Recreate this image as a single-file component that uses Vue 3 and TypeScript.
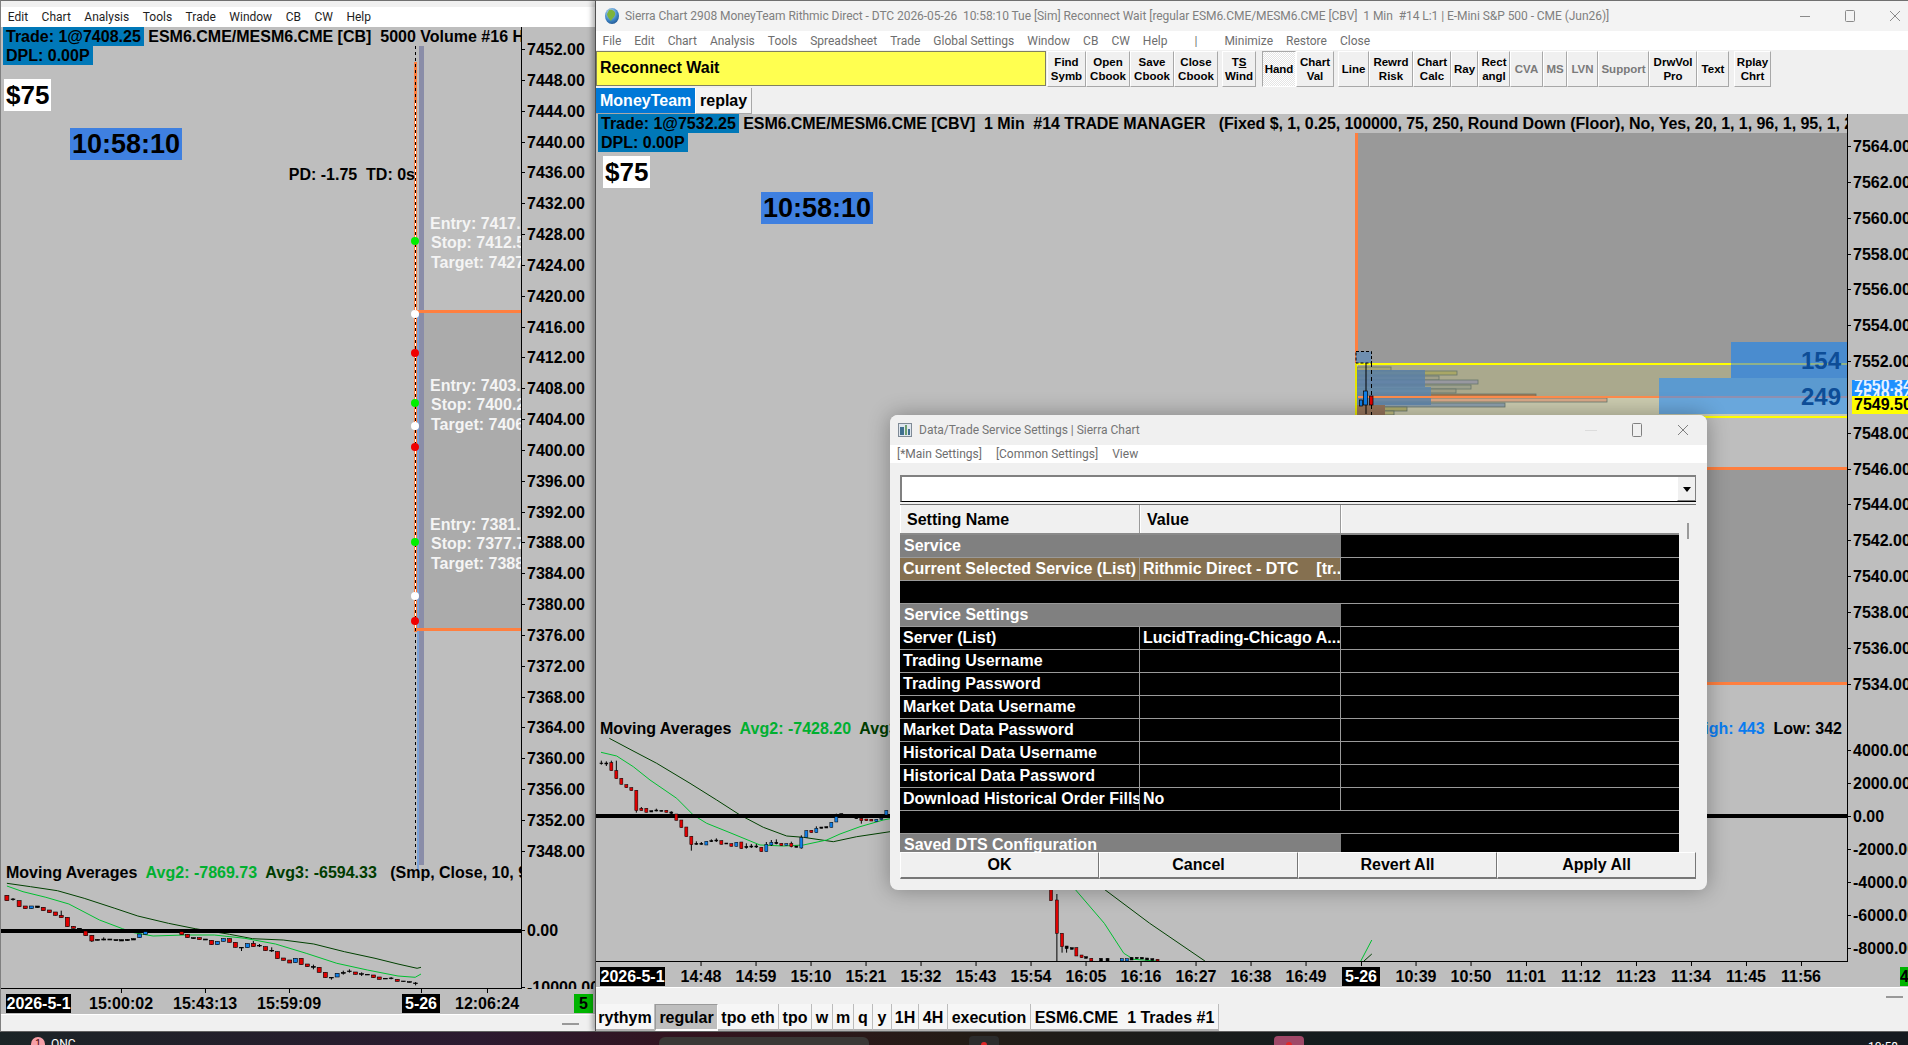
<script setup lang="ts">
type Bar = [number, number, number, string, number?, number?];

const titleText = "Sierra Chart 2908 MoneyTeam Rithmic Direct - DTC 2026-05-26  10:58:10 Tue [Sim] Reconnect Wait [regular ESM6.CME/MESM6.CME [CBV]  1 Min  #14 L:1 | E-Mini S&P 500 - CME (Jun26)]";
const headLeft = " ESM6.CME/MESM6.CME [CB]  5000 Volume #16 H";
const headRight = " ESM6.CME/MESM6.CME [CBV]  1 Min  #14 TRADE MANAGER   (Fixed $, 1, 0.25, 100000, 75, 250, Round Down (Floor), No, Yes, 20, 1, 1, 96, 1, 95, 1, 2";
const pdText = "PD: -1.75  TD: 0s";
const maName = "Moving Averages  ";
const gap2 = "  ";
const leftTail = "   (Smp, Close, 10, 9";
const lowText = "  Low: 342";

const menuLeft = ["Edit", "Chart", "Analysis", "Tools", "Trade", "Window", "CB", "CW", "Help"];
const menuRight = ["File", "Edit", "Chart", "Analysis", "Tools", "Spreadsheet", "Trade", "Global Settings", "Window", "CB", "CW", "Help"];

const toolButtons = [
  { lines: ["Find", "Symb"], w: 39 },
  { lines: ["Open", "Cbook"], w: 44 },
  { lines: ["Save", "Cbook"], w: 44 },
  { lines: ["Close", "Cbook"], w: 44, gap: 4 },
  { lines: ["TS", "Wind"], w: 34, gap: 6 },
  { lines: ["Hand"], w: 34, pressed: true },
  { lines: ["Chart", "Val"], w: 38, gap: 4 },
  { lines: ["Line"], w: 31 },
  { lines: ["Rewrd", "Risk"], w: 44 },
  { lines: ["Chart", "Calc"], w: 38 },
  { lines: ["Ray"], w: 27 },
  { lines: ["Rect", "angl"], w: 32 },
  { lines: ["CVA"], w: 33, off: true },
  { lines: ["MS"], w: 24, off: true },
  { lines: ["LVN"], w: 31, off: true },
  { lines: ["Support"], w: 51, off: true },
  { lines: ["DrwVol", "Pro"], w: 48 },
  { lines: ["Text"], w: 32, gap: 5 },
  { lines: ["Rplay", "Chrt"], w: 37 },
];

const bottomTabs = [
  { t: "rythym", w: 59 }, { t: "regular", w: 63, on: true }, { t: "tpo eth", w: 61 }, { t: "tpo", w: 33 },
  { t: "w", w: 21 }, { t: "m", w: 21 }, { t: "q", w: 19 }, { t: "y", w: 19 }, { t: "1H", w: 27 },
  { t: "4H", w: 29 }, { t: "execution", w: 83 }, { t: "ESM6.CME  1 Trades #1", w: 188 },
];

const leftPrices = Array.from({ length: 27 }, (_, i) => ({
  t: (7452 - i * 4).toFixed(2),
  y: 49 + i * 30.84,
}));
leftPrices.push({ t: "0.00", y: 930 }, { t: "-10000.00", y: 987 });

const rightPrices = [7564, 7562, 7560, 7558, 7556, 7554, 7552, 7548, 7546, 7544, 7542, 7540, 7538, 7536, 7534].map((p) => ({
  t: p.toFixed(2),
  y: 146 + (7564 - p) * 17.92,
}));
[[4000, 750], [2000, 783], [0, 816], [-2000, 849], [-4000, 882], [-6000, 915], [-8000, 948]].forEach(([p, y]) => {
  rightPrices.push({ t: p.toFixed(2), y });
});

const leftTimes = [
  { t: "15:00:02", x: 121 }, { t: "15:43:13", x: 205 }, { t: "15:59:09", x: 289 },
  { t: "5-26", x: 421, box: true }, { t: "12:06:24", x: 487 },
];
const rightLabels = ["14:48", "14:59", "15:10", "15:21", "15:32", "15:43", "15:54", "16:05", "16:16", "16:27", "16:38", "16:49", "5-26", "10:39", "10:50", "11:01", "11:12", "11:23", "11:34", "11:45", "11:56"];
const rightTimes = rightLabels.map((t, i) => ({ t, x: 701 + i * 55, box: t === "5-26" }));

const trades = [
  { cls: "t1", e: "Entry: 7417.", s: "Stop: 7412.5", g: "Target: 7427" },
  { cls: "t2", e: "Entry: 7403.", s: "Stop: 7400.2", g: "Target: 7406" },
  { cls: "t3", e: "Entry: 7381.", s: "Stop: 7377.7", g: "Target: 7388" },
];
const dots = [
  [415, 241, "#00f000"], [415, 314, "#fff"], [415, 353, "#f00000"],
  [415, 403, "#00f000"], [415, 426, "#fff"], [415, 447, "#f00000"],
  [415, 542, "#00f000"], [415, 596, "#fff"], [415, 621, "#f00000"],
] as [number, number, string][];

const R = "#e00000";
const B = "#0f7fe8";
const K = "#000";

// left lower pane, measured on x = 15.7 per bar
const leftBars: Bar[] = [
  [18, 166, 182, R], [34, 177, 179, K, 174, 182], [50, 182, 200, R], [66, 198, 206, R], [82, 198, 206, B], [98, 198, 203, K],
  [113, 202, 212, R], [129, 210, 218, R], [145, 216, 226, R], [160, 226, 233, R, 212, 233], [176, 232, 260, R], [192, 259, 265, R],
  [208, 265, 267, K], [224, 273, 287, R], [240, 286, 303, R, 286, 306], [255, 298, 301, K], [271, 297, 300, K, 292, 301], [287, 297, 300, K],
  [303, 299, 302, K], [318, 299, 303, K], [333, 298, 302, K], [349, 296, 300, K], [365, 282, 293, B], [380, 275, 283, B],
  [396, 274, 277, K], [412, 271, 273, K], [475, 275, 284, R], [490, 283, 293, R], [506, 293, 296, K], [521, 293, 299, R],
  [537, 297, 300, K], [553, 301, 314, R], [568, 304, 314, B], [584, 296, 304, B], [600, 296, 307, R], [615, 307, 322, R],
  [631, 322, 324, K, 322, 333], [647, 311, 323, B], [662, 310, 320, R, 303, 320], [678, 316, 318, K, 312, 321], [694, 320, 332, R], [710, 331, 333, K, 322, 336],
  [725, 335, 356, R], [741, 354, 361, R], [757, 360, 369, R], [772, 355, 368, B], [787, 355, 374, R], [803, 372, 380, R],
  [819, 379, 382, K, 374, 388], [834, 382, 397, R], [850, 397, 413, R], [866, 412, 414, K, 412, 419], [881, 400, 411, B], [897, 397, 400, K, 392, 404],
  [913, 393, 395, K, 388, 398], [929, 396, 403, R], [945, 401, 403, K, 397, 408], [960, 403, 405, K], [976, 405, 413, R], [991, 411, 418, R],
  [1007, 415, 417, K], [1022, 414, 416, K, 411, 418], [1038, 418, 424, R], [1054, 423, 425, K], [1070, 425, 427, K], [1086, 429, 431, K, 426, 436],
];
const leftCandles = leftBars.map((b) => toPage(b, (x) => x / 2.613, (y) => 840 + y / 3));
const leftMa2 = line([[18, 138], [60, 155], [120, 172], [180, 192], [260, 240], [320, 266], [350, 278], [400, 288], [480, 285], [560, 285], [640, 295], [720, 312], [800, 340], [880, 370], [960, 390], [1040, 408], [1085, 412], [1100, 402]], 2.613, 0, 840);
const leftMa3 = line([[18, 130], [80, 140], [150, 152], [220, 175], [300, 205], [360, 228], [440, 250], [510, 266], [600, 283], [660, 296], [740, 300], [820, 312], [900, 335], [980, 355], [1040, 372], [1090, 385], [1100, 382]], 2.613, 0, 840);

const rightBars: Bar[] = [
  [34, 129, 131, K, 122, 134], [49, 129, 132, K, 124, 138], [64, 128, 152, R, 122, 152], [79, 152, 176, R, 122, 176], [94, 175, 193, R], [109, 194, 203, R],
  [124, 203, 212, R], [139, 211, 272, R, 211, 278], [154, 265, 272, R, 261, 272], [169, 265, 277, R], [184, 272, 276, K], [199, 270, 273, K, 266, 274],
  [214, 271, 274, K], [229, 271, 277, R], [244, 276, 280, K, 274, 284], [259, 282, 301, R], [274, 300, 323, R], [289, 321, 350, R], [304, 349, 374, R, 349, 392],
  [319, 370, 373, K, 364, 374], [334, 370, 373, K, 366, 374], [349, 364, 375, B], [364, 362, 365, K, 358, 366], [379, 360, 363, K, 355, 366], [394, 362, 373, R],
  [409, 369, 372, K], [424, 371, 379, R], [439, 367, 379, B], [454, 366, 386, R], [469, 379, 383, K, 370, 386], [484, 378, 381, K, 372, 384], [499, 378, 381, K, 372, 384],
  [514, 382, 395, R], [529, 373, 395, B, 366, 395], [544, 367, 375, B, 360, 378], [559, 367, 371, K, 358, 373], [574, 370, 377, R], [589, 371, 376, B],
  [604, 370, 380, R, 365, 382], [619, 378, 382, K], [634, 352, 384, B, 346, 386], [649, 332, 352, B], [664, 331, 338, R], [679, 325, 338, B, 319, 338],
  [694, 321, 325, K], [709, 320, 324, K], [724, 307, 322, B], [739, 290, 306, B, 281, 306], [754, 281, 285, K], [799, 292, 296, K], [814, 295, 302, R, 295, 311],
  [829, 297, 302, R], [844, 298, 303, R], [859, 298, 305, B], [874, 295, 299, B], [889, 271, 285, B],
];
const lowBars: Bar[] = [
  [248, 0, 62, R], [257, 60, 160, R, 42, 243], [265, 160, 200, R, 160, 218], [272, 198, 206, K, 198, 218], [280, 203, 208, K], [287, 203, 228, R], [295, 225, 233, R],
  [302, 230, 235, K], [310, 235, 243, R], [325, 235, 243, K], [335, 235, 243, K], [357, 236, 243, B], [365, 236, 243, B], [372, 232, 240, K], [380, 232, 236, K],
  [388, 232, 237, K], [396, 234, 240, K], [404, 236, 241, K], [412, 238, 243, R],
];
const rightCandles = [
  ...rightBars.map((b) => toPage(b, (x) => 590 + x / 3, (y) => 720 + y / 3)),
  ...lowBars.map((b) => toPage(b, (x) => 890 + x / 1.54, (y) => 880 + y / 3)),
];
const rightMa2 = line([[33, 97], [80, 108], [130, 140], [180, 180], [260, 235], [310, 285], [350, 310], [420, 338], [510, 375], [580, 378], [640, 375], [710, 360], [750, 342], [810, 320], [880, 300], [900, 296]], 3, 590, 720);
const rightMa3 = line([[58, 55], [120, 88], [200, 130], [300, 190], [380, 240], [450, 285], [520, 322], [590, 348], [640, 352], [730, 365], [800, 350], [900, 335]], 3, 590, 720);
const lowMa2 = line([[285, 28], [330, 130], [360, 220], [375, 238], [410, 243]], 1.54, 890, 880);
const lowMa3 = line([[330, 28], [400, 130], [485, 243]], 1.54, 890, 880);
const lastMa2 = line([[725, 243], [742, 180]], 1.54, 890, 880);
const lastMa3 = line([[730, 243], [742, 222]], 1.54, 890, 880);

// volume profile, x in px from the value area's left edge, top to bottom
const profile = [
  [367, 34, "#a3a37a"], [371, 100, "#a9a766"], [376, 82, "#a0a088"], [380, 121, "#9898a0"], [385, 114, "#9ca08c"],
  [389, 99, "#9c9c84"], [394, 179, "#a8764c"], [398, 250, "#d8a888"], [403, 148, "#8ea0ac"], [407, 50, "#b0ae70"], [411, 37, "#c0bd80"],
] as [number, number, string][];

const rows = [
  { kind: "section", a: "Service", b: "" },
  { kind: "current", a: "Current Selected Service (List)", b: "Rithmic Direct - DTC    [tr..." },
  { kind: "blank", a: "", b: "" },
  { kind: "section", a: "Service Settings", b: "" },
  { kind: "row", a: "Server (List)", b: "LucidTrading-Chicago A..." },
  { kind: "row", a: "Trading Username", b: "" },
  { kind: "row", a: "Trading Password", b: "" },
  { kind: "row", a: "Market Data Username", b: "" },
  { kind: "row", a: "Market Data Password", b: "" },
  { kind: "row", a: "Historical Data Username", b: "" },
  { kind: "row", a: "Historical Data Password", b: "" },
  { kind: "row", a: "Download Historical Order Fills", b: "No" },
  { kind: "blank", a: "", b: "" },
  { kind: "section", a: "Saved DTS Configuration", b: "" },
];

function toPage(b: Bar, fx: (x: number) => number, fy: (y: number) => number) {
  const [x, top, bottom, color, wt, wb] = b;
  return {
    x: fx(x),
    top: fy(top),
    bottom: fy(bottom),
    color,
    wickTop: fy(wt ?? top),
    wickBottom: fy(wb ?? bottom),
  };
}

function line(pts: number[][], sx: number, ox: number, oy: number) {
  return pts.map(([x, y]) => `${(ox + x / sx).toFixed(1)},${(oy + y / 3).toFixed(1)}`).join(" ");
}

const placeY = (y: number) => ({ top: `${y}px` });
const placeX = (x: number) => ({ left: `${x}px` });
</script>

<template>
  <div class="desktop">
    <!-- left chart window -->
    <section class="window win-left">
      <div class="top-band"></div>
      <nav class="menu menu-dark">
        <span v-for="m in menuLeft" :key="m">{{ m }}</span>
      </nav>
      <div class="chart-grid grid-left">
        <div class="plot">
          <svg class="draw" width="520" height="962" viewBox="1 27 520 962">
            <rect x="424" y="311" width="98" height="318" fill="#ababab" />
            <rect x="419" y="46" width="5" height="819" fill="#8a8da8" />
            <rect x="417" y="310" width="2" height="560" fill="#7ba2d8" />
            <rect x="414" y="62" width="3" height="570" fill="#ff7f3f" />
            <rect x="415" y="100" width="1" height="530" fill="#fff" />
            <rect x="415" y="278" width="1" height="36" fill="#fff" />
            <line x1="415.5" y1="46" x2="415.5" y2="865" stroke="#000" stroke-dasharray="3 3" />
            <rect x="416" y="310" width="106" height="3" fill="#ff7f3f" />
            <rect x="416" y="628" width="106" height="3" fill="#ff7f3f" />
            <circle v-for="(d, i) in dots" :key="i" :cx="d[0]" :cy="d[1]" r="4" :fill="d[2]" />
            <polyline :points="leftMa3" class="ma ma3" />
            <polyline :points="leftMa2" class="ma ma2" />
            <rect x="1" y="929" width="521" height="4" fill="#000" />
            <g v-for="(c, i) in leftCandles" :key="i">
              <line :x1="c.x" :x2="c.x" :y1="c.wickTop" :y2="c.wickBottom" stroke="#000" />
              <rect :x="c.x - 2" :y="c.top" width="4" :height="c.bottom - c.top" :fill="c.color" stroke="#000" stroke-width="0.6" />
            </g>
          </svg>

          <div class="head">
            <div><span class="hl">Trade: 1@7408.25</span><span>{{ headLeft }}</span></div>
            <div><span class="hl">DPL: 0.00P</span></div>
          </div>
          <div class="cash cash-left">$75</div>
          <div class="clock clock-left">10:58:10</div>
          <div class="pd">{{ pdText }}</div>
          <div v-for="t in trades" :key="t.cls" :class="['trade', t.cls]">
            <div>{{ t.e }}</div>
            <div class="ind">{{ t.s }}</div>
            <div class="ind">{{ t.g }}</div>
          </div>
          <div class="study study-left">{{ maName }}<span class="green">Avg2: -7869.73</span>{{ gap2 }}<span class="dkgreen">Avg3: -6594.33</span>{{ leftTail }}</div>
        </div>
        <div class="axis">
          <span v-for="p in leftPrices" :key="p.t" class="price" :style="placeY(p.y - 27 - 8)">{{ p.t }}</span>
        </div>
        <div class="times">
          <span class="date date-left">2026-5-1</span>
          <span
            v-for="t in leftTimes"
            :key="t.t"
            :class="['time', { box: t.box }]"
            :style="placeX(t.x - 1)"
          >{{ t.t }}</span>
          <span class="flag flag-left">5</span>
        </div>
      </div>
      <footer class="foot foot-left"><i class="dash"></i></footer>
    </section>

    <!-- right chart window -->
    <section class="window win-right">
      <header class="titlebar">
        <svg class="globe" width="16" height="18" viewBox="0 0 16 18">
          <defs>
            <radialGradient id="gl" cx="0.4" cy="0.3" r="0.8">
              <stop offset="0" stop-color="#cfe9ff" />
              <stop offset="0.6" stop-color="#3d85c6" />
              <stop offset="1" stop-color="#1d4f86" />
            </radialGradient>
          </defs>
          <ellipse cx="8" cy="9" rx="7" ry="8" fill="url(#gl)" />
          <path d="M5 3 C9 2 12 5 11 8 C10 11 8 11 7 14 C5 12 3 9 3 7 Z" fill="#7db33a" />
        </svg>
        <span class="title-text">{{ titleText }}</span>
        <div class="controls">
          <svg width="12" height="12" viewBox="0 0 12 12"><path d="M1 6.5h10" stroke="#8a8a8a" /></svg>
          <svg width="12" height="12" viewBox="0 0 12 12"><rect x="1.5" y="0.5" width="9" height="11" rx="1" fill="none" stroke="#8a8a8a" /></svg>
          <svg width="12" height="12" viewBox="0 0 12 12"><path d="M1 1l10 10M11 1L1 11" stroke="#8a8a8a" /></svg>
        </div>
      </header>
      <nav class="menu menu-gray">
        <span v-for="m in menuRight" :key="m">{{ m }}</span>
        <span class="sep">|</span>
        <span>Minimize</span>
        <span>Restore</span>
        <span>Close</span>
      </nav>
      <div class="toolbar">
        <div class="status">Reconnect Wait</div>
        <button
          v-for="b in toolButtons"
          :key="b.lines.join()"
          :class="['tool', { pressed: b.pressed, off: b.off }]"
          :style="{ width: b.w + 'px', marginRight: (b.gap ?? 0) + 'px' }"
        >
          <span v-for="l in b.lines" :key="l">
            <template v-if="l === 'TS'">T<u>S</u></template>
            <template v-else>{{ l }}</template>
          </span>
        </button>
      </div>
      <div class="books">
        <span class="book book-on">MoneyTeam</span>
        <span class="book">replay</span>
      </div>
      <div class="chart-grid grid-right">
        <div class="plot plot-right">
          <svg class="draw" width="1251" height="848" viewBox="596 114 1251 848">
            <rect x="1358" y="133" width="489" height="230" fill="#999" />
            <rect x="1358" y="468" width="489" height="215" fill="#999" />
            <rect x="1355" y="133" width="3" height="230" fill="#ff7f3f" />
            <rect x="1358" y="365" width="489" height="32" fill="#aaa98d" />
            <rect x="1358" y="397" width="489" height="19" fill="#cbcbaf" />
            <rect v-for="p in profile" :key="p[0]" x="1357" :y="p[0]" :width="p[1]" height="4" :fill="p[2]" stroke="#66766c" stroke-width="0.8" />
            <rect x="1357" y="370" width="68" height="17" fill="#5a80a8" opacity="0.85" />
            <rect x="1357" y="387" width="74" height="18" fill="#5e86ad" opacity="0.85" />
            <rect x="1357" y="405" width="28" height="10" fill="#96755c" />
            <rect x="1731" y="342" width="116" height="36" fill="#4a8ccf" />
            <rect x="1659" y="378" width="188" height="20" fill="#5b9ad0" />
            <rect x="1659" y="398" width="188" height="16" fill="#69a7dc" />
            <rect x="1358" y="396" width="301" height="2" fill="#ff8c4c" />
            <rect x="1659" y="396" width="188" height="2" fill="#8f8fb0" />
            <rect x="1356" y="363" width="491" height="2" fill="#ffff00" />
            <rect x="1731" y="363" width="116" height="2" fill="#8fb18a" />
            <rect x="1355" y="363" width="2" height="53" fill="#e6e600" />
            <rect x="1356" y="416" width="491" height="2" fill="#ffff00" />
            <rect x="1707" y="467" width="140" height="3" fill="#ff7f3f" />
            <rect x="1707" y="682" width="140" height="3" fill="#ff7f3f" />
            <rect x="1356" y="351.5" width="15.5" height="11.5" fill="#6f8fb0" stroke="#000" stroke-dasharray="3 2" />
            <line x1="1366" x2="1366" y1="363" y2="414" stroke="#000" />
            <line x1="1371.5" x2="1371.5" y1="363" y2="415" stroke="#000" stroke-dasharray="4 3" />
            <rect x="1363.5" y="391" width="4" height="14" :fill="B" stroke="#000" stroke-width="0.7" />
            <rect x="1359.5" y="400" width="3" height="6" :fill="B" stroke="#000" stroke-width="0.7" />
            <rect x="1369.5" y="396" width="3.5" height="9" :fill="R" stroke="#000" stroke-width="0.7" />

            <polyline :points="rightMa3" class="ma ma3" />
            <polyline :points="rightMa2" class="ma ma2" />
            <polyline :points="lowMa3" class="ma ma3" />
            <polyline :points="lowMa2" class="ma ma2" />
            <polyline :points="lastMa3" class="ma ma3" />
            <polyline :points="lastMa2" class="ma ma2" />
            <rect x="596" y="814" width="1251" height="4" fill="#000" />
            <g v-for="(c, i) in rightCandles" :key="i">
              <line :x1="c.x" :x2="c.x" :y1="c.wickTop" :y2="c.wickBottom" stroke="#000" />
              <rect :x="c.x - 1.5" :y="c.top" width="3" :height="c.bottom - c.top" :fill="c.color" stroke="#000" stroke-width="0.5" />
            </g>
          </svg>

          <div class="head">
            <div><span class="hl">Trade: 1@7532.25</span><span class="tight">{{ headRight }}</span></div>
            <div><span class="hl">DPL: 0.00P</span></div>
          </div>
          <div class="cash cash-right">$75</div>
          <div class="clock clock-right">10:58:10</div>
          <div class="vol vol-a">154</div>
          <div class="vol vol-b">249</div>
          <div class="study study-right">{{ maName }}<span class="green">Avg2: -7428.20</span>{{ gap2 }}<span class="dkgreen">Avg3</span></div>
          <div class="study study-hl"><span class="blue">High: 443</span>{{ lowText }}</div>
        </div>
        <div class="axis">
          <span v-for="p in rightPrices" :key="p.t" class="price" :style="placeY(p.y - 114 - 8)">{{ p.t }}</span>
          <span class="last last-blue"><b>7550.34</b><b>7549.94</b></span>
          <span class="last last-yellow">7549.50</span>
        </div>
        <div class="times">
          <span class="date date-right">2026-5-1</span>
          <span
            v-for="t in rightTimes"
            :key="t.t"
            :class="['time', { box: t.box }]"
            :style="placeX(t.x - 596)"
          >{{ t.t }}</span>
          <span class="flag flag-right">4</span>
        </div>
      </div>
      <footer class="foot foot-right">
        <i class="dash"></i>
        <div class="tabs">
          <span
            v-for="t in bottomTabs"
            :key="t.t"
            :class="['tab', { on: t.on }]"
            :style="{ width: t.w + 'px' }"
          >{{ t.t }}</span>
        </div>
      </footer>
    </section>

    <!-- settings dialog -->
    <section class="dialog">
      <header class="dlg-title">
        <svg width="14" height="14" viewBox="0 0 14 14">
          <rect x="0.5" y="0.5" width="13" height="13" fill="#dfe6ee" stroke="#7f8a96" />
          <rect x="2" y="4" width="4" height="8" fill="#3f6f8f" />
          <rect x="7" y="2" width="2" height="10" fill="#6fa06f" />
          <rect x="10" y="6" width="2" height="6" fill="#3f6f8f" />
        </svg>
        <span class="dlg-name">Data/Trade Service Settings | Sierra Chart</span>
        <div class="dlg-controls">
          <svg width="12" height="12" viewBox="0 0 12 12"><path d="M0 6.5h12" stroke="#dcdcdc" /></svg>
          <svg width="12" height="14" viewBox="0 0 12 14"><rect x="1.5" y="0.5" width="9" height="13" rx="1" fill="none" stroke="#808080" /></svg>
          <svg width="12" height="12" viewBox="0 0 12 12"><path d="M1 1l10 10M11 1L1 11" stroke="#808080" /></svg>
        </div>
      </header>
      <nav class="dlg-menu">
        <span>[*Main Settings]</span>
        <span>[Common Settings]</span>
        <span>View</span>
      </nav>
      <div class="dlg-body">
        <div class="combo"><i class="combo-btn"></i></div>
        <div class="table">
          <div class="table-main">
            <div class="row row-head">
              <span class="cell">Setting Name</span>
              <span class="cell">Value</span>
              <span class="cell"></span>
            </div>
            <div v-for="(r, i) in rows" :key="i" :class="['row', 'row-' + r.kind]">
              <span class="cell">{{ r.a }}</span>
              <span class="cell">{{ r.b }}</span>
              <span class="cell"></span>
            </div>
          </div>
          <div class="scroll"><i></i></div>
        </div>
        <div class="dlg-buttons">
          <button>OK</button>
          <button>Cancel</button>
          <button>Revert All</button>
          <button>Apply All</button>
        </div>
      </div>
    </section>

    <!-- taskbar -->
    <div class="taskbar">
      <span class="badge">1</span>
      <span class="task-name">ONC</span>
      <i class="task-app"></i>
      <i class="task-icon"><b class="red"></b></i>
      <i class="task-icon task-pink"><b class="red"></b></i>
      <span class="task-clock">10:58</span>
    </div>
  </div>
</template>

<style>
html,
body {
  margin: 0;
  background: #1a1418;
  overflow: hidden;
}
</style>

<style scoped>
.desktop {
  position: relative;
  width: 1908px;
  height: 1045px;
  overflow: hidden;
  font-family: "Liberation Sans", Arial, sans-serif;
  background: #181418;
}

.window {
  position: absolute;
  top: 0;
  height: 1032px;
  display: flex;
  flex-direction: column;
  background: #f0f0f0;
  border-top: 1px solid #707070;
  border-bottom: 1px solid #606060;
  box-sizing: border-box;
}
.win-left {
  left: 0;
  width: 595px;
  border-left: 1px solid #808080;
}
.win-right {
  left: 595px;
  width: 1313px;
  box-shadow: -3px 0 5px rgba(0, 0, 0, 0.3);
  border-left: 1px solid #505050;
}

.top-band {
  height: 6px;
}

.menu {
  display: flex;
  align-items: center;
  background: #fff;
  font-family: Roboto, "Open Sans", sans-serif;
  font-size: 12px;
  white-space: nowrap;
}
.menu span {
  padding: 0 6.5px;
}
.menu-dark {
  height: 20px;
  color: #1e1e1e;
}
.menu-dark span {
  padding: 0 6.75px;
}
.menu-gray {
  height: 19px;
  color: #6e6e6e;
}
.menu-gray .sep {
  margin: 0 14px 0 14px;
}

.chart-grid {
  display: grid;
  min-height: 0;
  flex: none;
  background: #bebebe;
  font-weight: 700;
  font-size: 16px;
  color: #000;
}
.grid-left {
  grid-template-columns: 521px 1fr;
  grid-template-rows: 962px 25px;
  height: 987px;
}
.grid-right {
  grid-template-columns: 1252px 1fr;
  grid-template-rows: 848px 25px;
  height: 873px;
}

.plot {
  position: relative;
  overflow: hidden;
  border-right: 1px solid #000;
  border-bottom: 1px solid #000;
  white-space: pre;
  line-height: 19px;
}
.draw {
  position: absolute;
  left: 0;
  top: 0;
}
.ma {
  fill: none;
  stroke-width: 1;
}
.ma2 {
  stroke: #00c030;
}
.ma3 {
  stroke: #004000;
}

.head {
  position: relative;
  padding-left: 2px;
}
.tight {
  letter-spacing: -0.07px;
}
.hl {
  display: inline-block;
  background: #0078b8;
  padding: 0 3px;
  height: 19px;
}
.cash,
.clock {
  position: absolute;
  font-size: 26px;
  line-height: 32px;
  height: 32px;
}
.cash {
  background: #fff;
  padding: 0 2px;
}
.clock {
  background: #3f80e0;
  padding: 0 2px;
  font-size: 27px;
}
.cash-left {
  left: 3px;
  top: 52px;
}
.clock-left {
  left: 69px;
  top: 101px;
}
.cash-right {
  left: 7px;
  top: 42px;
}
.clock-right {
  left: 165px;
  top: 78px;
}
.pd {
  position: absolute;
  right: 106px;
  top: 138px;
}
.trade {
  position: absolute;
  left: 429px;
  color: #f4f4f4;
  line-height: 19.4px;
}
.ind {
  padding-left: 1px;
}
.t1 {
  top: 187px;
}
.t2 {
  top: 349px;
}
.t3 {
  top: 488px;
}
.study {
  position: absolute;
}
.study-left {
  left: 5px;
  top: 836px;
}
.study-right {
  left: 4px;
  top: 605px;
}
.study-hl {
  right: 5px;
  top: 605px;
}
.green {
  color: #00b030;
}
.dkgreen {
  color: #003c00;
}
.blue {
  color: #0a7cf0;
}
.vol {
  position: absolute;
  right: 6px;
  font-size: 24px;
  line-height: 28px;
  color: #0d4d97;
}
.vol-a {
  top: 233px;
}
.vol-b {
  top: 269px;
}

.axis {
  position: relative;
  overflow: hidden;
}
.price {
  position: absolute;
  left: 5px;
  line-height: 18px;
  white-space: nowrap;
}
.price::before {
  content: "";
  position: absolute;
  left: -5px;
  top: 8px;
  width: 3px;
  height: 1px;
  background: #000;
}
.last {
  position: absolute;
  left: 4px;
  width: 60px;
  padding-left: 2px;
  line-height: 18px;
}
.last-blue {
  top: 266px;
  height: 16px;
  background: #1e90ff;
  color: #e8f2ff;
  overflow: hidden;
}
.last-blue b {
  display: block;
  line-height: 11px;
}
.last-yellow {
  top: 282px;
  background: #ffff00;
}

.times {
  position: relative;
  grid-column: 1 / 3;
  overflow: hidden;
}
.time {
  position: absolute;
  top: 5px;
  height: 19px;
  line-height: 20px;
  transform: translateX(-50%);
  white-space: nowrap;
}
.time::before {
  content: "";
  position: absolute;
  left: 50%;
  top: -5px;
  width: 1px;
  height: 4px;
  background: #000;
}
.box,
.date {
  background: #000;
  color: #fff;
}
.box {
  padding: 0 3px;
}
.date {
  position: absolute;
  top: 5px;
  height: 19px;
  line-height: 20px;
  padding: 0 0.5px;
}
.date-left {
  left: 5px;
}
.date-right {
  left: 4px;
}
.flag {
  position: absolute;
  top: 5px;
  height: 19px;
  line-height: 20px;
  background: #00b400;
  text-align: center;
}
.flag-left {
  left: 573px;
  width: 19px;
}
.flag-right {
  left: 1304px;
  width: 8px;
  overflow: hidden;
}

.foot {
  position: relative;
  background: #f0f0f0;
  flex: 1;
  border-top: 1px solid #fff;
}
.dash {
  position: absolute;
  top: 8px;
  right: 16px;
  width: 17px;
  height: 2px;
  background: #999;
}
.foot-right .dash {
  right: 5px;
}
.tabs {
  position: absolute;
  left: 0;
  bottom: 0;
  display: flex;
  height: 27px;
  font-weight: 700;
  font-size: 16px;
  line-height: 27px;
  white-space: pre;
}
.tab {
  box-sizing: border-box;
  background: #f6f6f6;
  border-right: 1px solid #bcbcbc;
  border-bottom: 2px solid #b0b0b0;
  text-align: center;
}
.tab.on {
  background: #bebebe;
  border: 1px solid #9a9a9a;
  border-bottom: 2px solid #fff;
  border-right-color: #fff;
  line-height: 25px;
}

.titlebar {
  position: relative;
  display: flex;
  align-items: center;
  height: 30px;
  background: #f3f3f3;
  color: #7f7f7f;
  font-family: Roboto, "Open Sans", sans-serif;
  font-size: 12px;
  letter-spacing: -0.05px;
  white-space: pre;
}
.globe {
  margin-left: 8px;
  margin-right: 5px;
}
.controls {
  position: absolute;
  right: 7px;
  top: 9px;
  display: flex;
  gap: 33px;
}

.toolbar {
  display: flex;
  height: 37px;
  padding-top: 1px;
  box-sizing: border-box;
  background: #f0f0f0;
}
.status {
  box-sizing: border-box;
  width: 450px;
  height: 35px;
  margin-right: 1px;
  padding-left: 3px;
  background: #ffff50;
  border: 1px solid #808060;
  font-weight: 700;
  font-size: 16px;
  line-height: 31px;
}
.tool {
  display: flex;
  flex-direction: column;
  align-items: center;
  justify-content: center;
  box-sizing: border-box;
  height: 36px;
  padding: 0;
  background: #f0f0f0;
  border: 0;
  border-top: 1px solid #fff;
  border-left: 1px solid #fff;
  border-right: 1px solid #a8a8a8;
  border-bottom: 1px solid #a8a8a8;
  font-family: "Liberation Sans", Arial, sans-serif;
  font-weight: 700;
  font-size: 11.5px;
  line-height: 14px;
  color: #000;
  white-space: nowrap;
}
.tool.off {
  color: #7a7a7a;
}
.tool.pressed {
  background: repeating-conic-gradient(#fff 0 25%, #e4e4e4 0 50%) 0 0 / 2px 2px;
  border-color: #a8a8a8 #fff #fff #a8a8a8;
}

.books {
  display: flex;
  height: 27px;
  padding-top: 1px;
  box-sizing: border-box;
  font-weight: 700;
  font-size: 16px;
  line-height: 25px;
}
.book {
  padding: 0 4px;
  background: #f4f4f4;
  border-right: 1px solid #a8a8a8;
  border-bottom: 1px solid #a8a8a8;
}
.book-on {
  width: 91px;
  background: #0078d7;
  color: #fff;
  border-right: 1px solid #fff;
}

.dialog {
  position: absolute;
  left: 890px;
  top: 415px;
  width: 817px;
  height: 475px;
  display: flex;
  flex-direction: column;
  border-radius: 8px;
  overflow: hidden;
  background: #f0f0f0;
  box-shadow: 0 0 22px rgba(0, 0, 0, 0.32);
}
.dlg-title {
  position: relative;
  display: flex;
  align-items: center;
  height: 30px;
  flex: none;
  padding-left: 8px;
  background: #f0f0f0;
  color: #757575;
  font-family: Roboto, "Open Sans", sans-serif;
  font-size: 12px;
}
.dlg-name {
  margin-left: 7px;
}
.dlg-controls {
  position: absolute;
  right: 18px;
  top: 8px;
  display: flex;
  align-items: center;
  gap: 34px;
}
.dlg-menu {
  display: flex;
  gap: 14px;
  height: 18px;
  flex: none;
  padding-left: 7px;
  align-items: center;
  background: #fff;
  color: #6e6e6e;
  font-family: Roboto, "Open Sans", sans-serif;
  font-size: 12px;
}
.dlg-body {
  flex: 1;
  min-height: 0;
  padding: 12px 11px 0 10px;
  display: flex;
  flex-direction: column;
}
.combo {
  position: relative;
  box-sizing: border-box;
  height: 27px;
  flex: none;
  background: #fff;
  border-top: 2px solid #808080;
  border-left: 2px solid #808080;
  border-bottom: 1px solid #000;
}
.combo-btn {
  position: absolute;
  right: 0;
  top: 0;
  bottom: 0;
  width: 17px;
  background: #f0f0f0;
  border-left: 1px solid #fff;
  border-bottom: 1px solid #808080;
  border-right: 1px solid #808080;
}
.combo-btn::after {
  content: "";
  position: absolute;
  left: 5px;
  top: 10px;
  border-left: 4px solid transparent;
  border-right: 4px solid transparent;
  border-top: 5px solid #000;
}
.table {
  display: flex;
  height: 348px;
  flex: none;
  margin-top: 2px;
  overflow: hidden;
  border-top: 1px solid #707070;
  box-sizing: border-box;
  font-weight: 700;
  font-size: 16px;
}
.table-main {
  flex: 1;
  min-width: 0;
}
.row {
  display: grid;
  grid-template-columns: 240px 201px 1fr;
  box-sizing: border-box;
  height: 23px;
  line-height: 22px;
  color: #fff;
  background: #000;
  border-bottom: 1px solid #9a9a9a;
}
.cell {
  overflow: hidden;
  white-space: pre;
  padding-left: 3px;
  border-right: 1px solid #9a9a9a;
}
.cell:last-child {
  border-right: 0;
}
.row-head {
  height: 30px;
  line-height: 29px;
  color: #000;
  background: #f0f0f0;
  border-bottom: 2px solid #8a8a8a;
}
.row-head .cell {
  padding-left: 6px;
  border-left: 1px solid #fff;
}
.row-section .cell:nth-child(1),
.row-section .cell:nth-child(2) {
  background: #808080;
  border-right: 0;
}
.row-section .cell:nth-child(1) {
  overflow: visible;
  padding-left: 4px;
}
.row-current .cell:nth-child(1),
.row-current .cell:nth-child(2) {
  background: #857050;
}
.row-blank .cell {
  border-right: 0;
}
.scroll {
  position: relative;
  width: 17px;
  flex: none;
  background: #f0f0f0;
}
.scroll i {
  position: absolute;
  left: 8px;
  top: 18px;
  width: 2px;
  height: 16px;
  background: #9a9a9a;
}
.dlg-buttons {
  display: flex;
  flex: none;
  height: 27px;
}
.dlg-buttons button {
  flex: 1;
  box-sizing: border-box;
  padding: 0;
  background: #f0f0f0;
  border: 0;
  border-top: 1px solid #fff;
  border-left: 1px solid #fff;
  border-right: 1px solid #777;
  border-bottom: 2px solid #777;
  font-family: "Liberation Sans", Arial, sans-serif;
  font-weight: 700;
  font-size: 16px;
  color: #000;
}

.taskbar {
  position: absolute;
  left: 0;
  right: 0;
  top: 1032px;
  bottom: 0;
  display: flex;
  align-items: flex-start;
  overflow: hidden;
  background: linear-gradient(90deg, #1b2426 0, #2c1a30 25%, #33141e 37%, #241c16 50%, #141c1e 70%, #161a20 100%);
  color: #fff;
  font-family: Roboto, sans-serif;
  font-size: 12px;
}
.badge {
  width: 14px;
  height: 14px;
  margin: 5px 0 0 31px;
  border-radius: 50%;
  background: #f7a0a8;
  color: #400;
  font-size: 10px;
  line-height: 14px;
  text-align: center;
}
.task-name {
  margin: 5px 0 0 6px;
}
.task-app {
  width: 210px;
  height: 12px;
  margin: 5px 0 0 583px;
  border-radius: 6px 6px 0 0;
  background: #3a3836;
}
.task-icon {
  position: relative;
  width: 30px;
  height: 12px;
  margin: 4px 0 0 100px;
  border-radius: 4px 4px 0 0;
  background: #2c2c2c;
}
.task-pink {
  margin-left: 275px;
  background: #a04868;
}
.red {
  position: absolute;
  left: 12px;
  top: 6px;
  width: 6px;
  height: 6px;
  border-radius: 50%;
  background: #e02828;
}
.task-clock {
  margin: 8px 0 0 auto;
  padding-right: 10px;
}
</style>
